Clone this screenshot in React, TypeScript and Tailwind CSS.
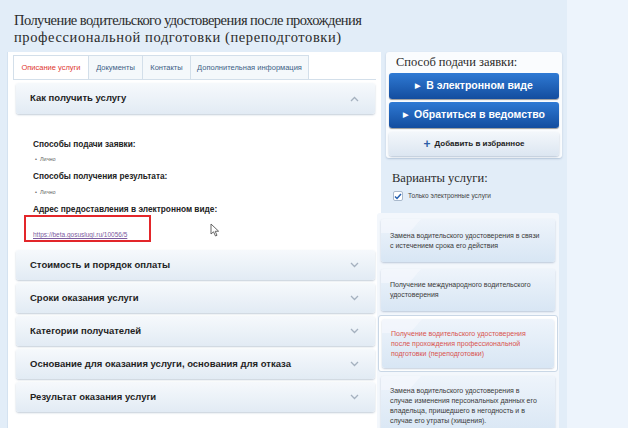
import React from "react";

const sans = { fontFamily: '"Liberation Sans", Arial, sans-serif' };
const serif = { fontFamily: '"Liberation Serif", "Times New Roman", serif' };

function ChevronDown() {
  return (
    <svg width="9" height="6" viewBox="0 0 9 6">
      <polyline points="1,1 4.5,4.5 8,1" fill="none" stroke="#a5b1bf" strokeWidth="1.3" />
    </svg>
  );
}
function ChevronUp() {
  return (
    <svg width="9" height="6" viewBox="0 0 9 6">
      <polyline points="1,5 4.5,1.5 8,5" fill="none" stroke="#a5b1bf" strokeWidth="1.3" />
    </svg>
  );
}

function AccItem({ title }: { title: string }) {
  return (
    <div className="h-[30px] shrink-0 rounded-[3px] bg-gradient-to-b from-[#f6f9fc] to-[#e2ebf4] shadow-[0_1px_2px_rgba(80,110,140,0.35)] flex items-center justify-between pl-[14px] pr-[16px]">
      <span className="text-[9.5px] font-bold text-[#1f1f1f]">{title}</span>
      <ChevronDown />
    </div>
  );
}

function VariantCard({ text, active }: { text: React.ReactNode; active?: boolean }) {
  return (
    <div className="relative h-full rounded-[3px] bg-gradient-to-b from-[#eef4fb] to-[#d8e6f4] shadow-[0_1px_2px_rgba(80,110,150,0.35)] overflow-hidden flex items-center px-[9px]">
      <div className="absolute left-0 top-0 w-[40px] h-[14px] bg-[#f6f9fd] opacity-60 [clip-path:polygon(0_0,100%_0,70%_100%,0_100%)]" />
      <span className={`relative text-[7px] leading-[10px] ${active ? "text-[#d9534f]" : "text-[#3a3a3a]"}`}>{text}</span>
    </div>
  );
}

export default function App() {
  return (
    <div className="w-[628px] h-[428px] overflow-hidden flex bg-[#edf4fc]" style={sans}>
      <div className="w-[567px] h-full bg-[#e2edf8] flex flex-col overflow-hidden">
        <h1 className="h-[52px] shrink-0 pl-[14px] pt-[12px] text-[14.5px] leading-[17px] text-[#2b2b2b]" style={serif}>
          <span className="tracking-[-0.55px]">Получение водительского удостоверения после прохождения</span>
          <br />
          <span className="tracking-[0.6px]">профессиональной подготовки (переподготовки)</span>
        </h1>
        <div className="flex flex-1 min-h-0 pl-[7px] gap-[5px]">
          {/* Left panel */}
          <div className="w-[374px] bg-white border-l border-[#d4e2f0] pt-[3px] pl-[5px] pr-[5px] flex flex-col">
            <div className="flex h-[24px] shrink-0">
              <div className="w-[76px] bg-white border border-b-0 border-[#d3dfea] flex items-center justify-center text-[7.5px] text-[#e0362f]">Описание услуги</div>
              <div className="w-[54px] bg-[#f4f8fb] border border-l-0 border-b-0 border-[#d3dfea] flex items-center justify-center text-[7.5px] text-[#3d5f86]">Документы</div>
              <div className="w-[48px] bg-[#f4f8fb] border border-l-0 border-b-0 border-[#d3dfea] flex items-center justify-center text-[7.5px] text-[#3d5f86]">Контакты</div>
              <div className="w-[118px] bg-[#f4f8fb] border border-l-0 border-b-0 border-[#d3dfea] flex items-center justify-center text-[7.5px] text-[#3d5f86]">Дополнительная информация</div>
            </div>
            <div className="flex-1 border-t border-[#d3dfea] pt-[3px] pl-[3px] pr-[1px] relative">
              <div className="h-[31px] rounded-[3px] bg-gradient-to-b from-[#f6f9fc] to-[#e2ebf4] shadow-[0_1px_2px_rgba(80,110,140,0.35)] flex items-center justify-between pl-[14px] pr-[16px]">
                <span className="text-[9.5px] font-bold text-[#1f1f1f]">Как получить услугу</span>
                <ChevronUp />
              </div>
              <div className="pl-[17px] pt-[24px] text-[#222]">
                <div className="h-[12px] leading-[12px] text-[8.3px] font-bold">Способы подачи заявки:</div>
                <div className="mt-[3px] h-[12px] leading-[12px] text-[5.5px] text-[#666] pl-[2px]">•&nbsp;&nbsp;Лично</div>
                <div className="mt-[5px] h-[12px] leading-[12px] text-[8.3px] font-bold">Способы получения результата:</div>
                <div className="mt-[4px] h-[12px] leading-[12px] text-[5.5px] text-[#666] pl-[2px]">•&nbsp;&nbsp;Лично</div>
                <div className="mt-[5px] h-[12px] leading-[12px] text-[8.3px] font-bold">Адрес предоставления в электронном виде:</div>
                <div className="-ml-[9px] w-[127px] h-[27px] border-2 border-[#e3262a] pl-[7px] pt-[3px]">
                  <span className="text-[6.5px] text-[#7b5b9e] underline leading-[10px]">https://beta.gosuslugi.ru/10056/5</span>
                </div>
              </div>
              <svg className="absolute left-[197px] top-[143px]" width="10" height="14" viewBox="0 0 10 14">
                <path d="M1 1 L1 11 L3.5 8.8 L5.5 13 L7 12.3 L5.2 8.3 L8.6 8.2 Z" fill="#fff" stroke="#555" strokeWidth="0.9" />
              </svg>
              <div className="mt-[8px] flex flex-col gap-[3px]">
                <AccItem title="Стоимость и порядок оплаты" />
                <AccItem title="Сроки оказания услуги" />
                <AccItem title="Категории получателей" />
                <AccItem title="Основание для оказания услуги, основания для отказа" />
                <AccItem title="Результат оказания услуги" />
              </div>
            </div>
          </div>
          {/* Sidebar */}
          <div className="w-[176px] flex flex-col">
            <div className="h-[106px] shrink-0 bg-[#fafcfe] rounded-[3px] shadow-[0_1px_2px_rgba(80,110,150,0.3)] px-[3px] pt-[2px]">
              <div className="pl-[7px] text-[12.5px] leading-[16px] text-[#2b2b2b]" style={serif}>Способ подачи заявки:</div>
              <div className="mt-[3px] h-[26px] rounded-[3px] bg-gradient-to-b from-[#2f7ad4] to-[#134d9f] shadow-[0_1px_1px_rgba(0,0,0,0.4)] flex items-center justify-center gap-[6px] text-white text-[10.5px] font-bold">
                <span className="text-[7px]">▶</span>В электронном виде
              </div>
              <div className="mt-[3px] h-[26px] rounded-[3px] bg-gradient-to-b from-[#2f7ad4] to-[#134d9f] shadow-[0_1px_1px_rgba(0,0,0,0.4)] flex items-center justify-center gap-[6px] text-white text-[10.5px] font-bold">
                <span className="text-[7px]">▶</span>Обратиться в ведомство
              </div>
              <div className="mt-[4px] h-[24px] rounded-[3px] bg-gradient-to-b from-[#f3f7fb] to-[#dce6f1] shadow-[0_1px_2px_rgba(80,110,150,0.4)] flex items-center justify-center gap-[4px] text-[#222] text-[8px] font-bold">
                <span className="text-[#2b5ea8] text-[12px] leading-[12px]">+</span>Добавить в избранное
              </div>
            </div>
            <div className="pl-[6px] mt-[12px] text-[12.5px] leading-[16px] text-[#2b2b2b]" style={serif}>Варианты услуги:</div>
            <div className="pl-[7px] mt-[5px] flex items-center gap-[5px]">
              <div className="w-[10px] h-[10px] rounded-[2px] border border-[#a9b9cc] bg-white flex items-center justify-center">
                <svg width="8" height="7" viewBox="0 0 8 7">
                  <polyline points="1,3.5 3,5.5 7,1" fill="none" stroke="#2560b0" strokeWidth="1.5" />
                </svg>
              </div>
              <span className="text-[6.5px] text-[#444]">Только электронные услуги</span>
            </div>
            <div className="mt-[12px] -ml-[9px] w-[182px] flex-1 bg-[#f3f7fc] rounded-t-[3px] px-[4px] pt-[6px] flex flex-col">
              <div className="h-[43px] shrink-0">
                <VariantCard text={<>Замена водительского удостоверения в связи<br />с истечением срока его действия</>} />
              </div>
              <div className="h-[42px] mt-[7px] shrink-0">
                <VariantCard text={<>Получение международного водительского<br />удостоверения</>} />
              </div>
              <div className="h-[57px] mt-[4px] shrink-0 -mx-[3px] border border-[#c9d7e6] rounded-[3px] bg-white p-[3px]">
                <VariantCard active text={<>Получение водительского удостоверения<br />после прохождения профессиональной<br />подготовки (переподготовки)</>} />
              </div>
              <div className="h-[60px] mt-[4px] shrink-0">
                <VariantCard text={<>Замена водительского удостоверения в<br />случае изменения персональных данных его<br />владельца, пришедшего в негодность и в<br />случае его утраты (хищения).</>} />
              </div>
            </div>
          </div>
        </div>
      </div>
      <div className="flex-1" />
    </div>
  );
}
